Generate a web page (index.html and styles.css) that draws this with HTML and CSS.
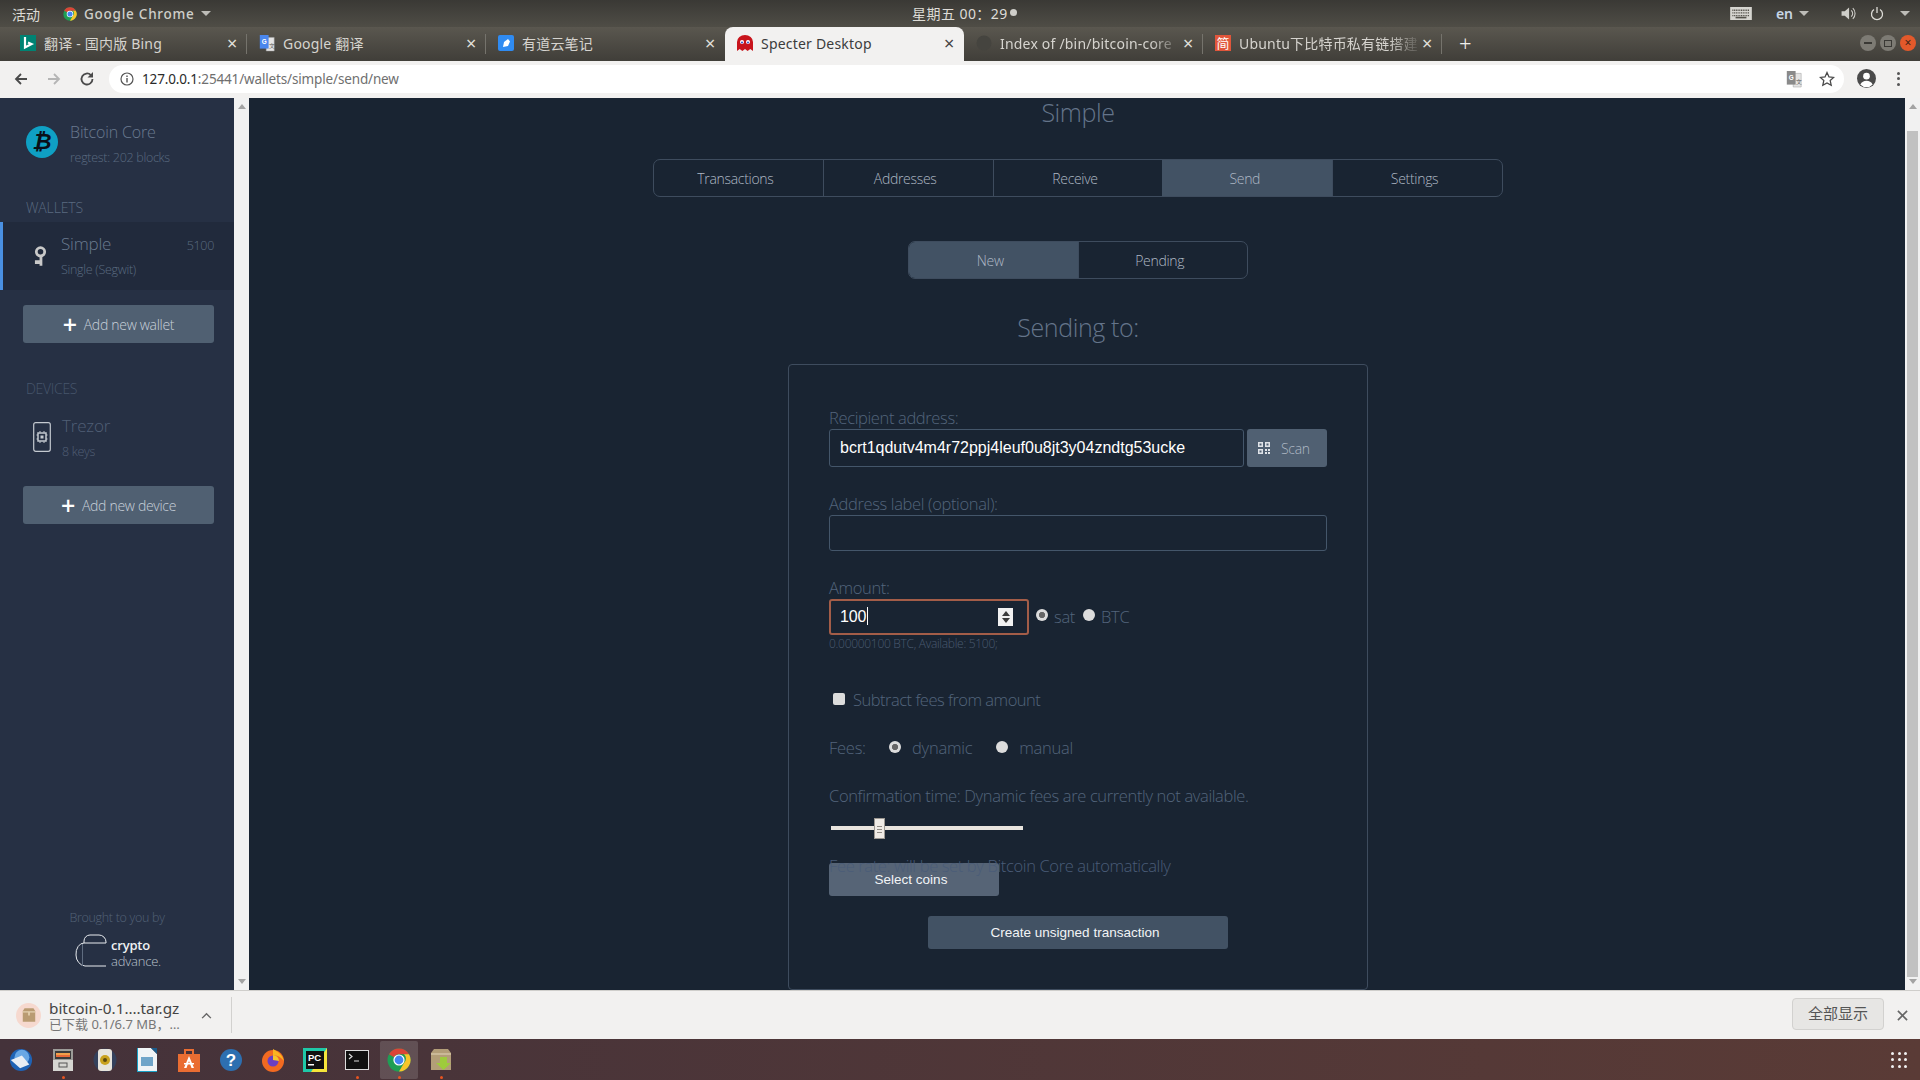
FILE: index.html
```html
<!DOCTYPE html>
<html lang="zh">
<head>
<meta charset="utf-8">
<title>Specter Desktop</title>
<link rel="stylesheet" href="styles.css">
</head>
<body>
<svg class="sprite" width="0" height="0">
  <symbol id="chrome" viewBox="0 0 24 24">
    <circle cx="12" cy="12" r="11.5" fill="#1e9e55"/>
    <path d="M12 .5a11.5 11.5 0 0 1 10 5.75H12a5.75 5.75 0 0 0-5 2.9L2 6.25A11.5 11.5 0 0 1 12 .5z" fill="#db4437"/>
    <path d="M22 6.25A11.5 11.5 0 0 1 12 23.5l5-8.6a5.75 5.75 0 0 0 0-8.65z" fill="#f7c52b"/>
    <circle cx="12" cy="12" r="5.6" fill="#fff"/>
    <circle cx="12" cy="12" r="4.4" fill="#4285f4"/>
  </symbol>
  <symbol id="translate" viewBox="0 0 20 22">
    <path d="M9 4h10v17H9z" fill="#e4e4e4" stroke="#999" stroke-width=".6"/>
    <path d="M1 1h11v17H1z" fill="currentColor"/>
    <text x="3.4" y="12" font-size="8" font-weight="700" fill="#fff" font-family="Liberation Sans">G</text>
    <text x="12" y="17" font-size="7" fill="#555" font-family="Liberation Sans">文</text>
  </symbol>
</svg>

<header class="sysbar">
  <div class="sys-left">
    <span class="sys-activities">活动</span>
    <svg class="ic-chrome-small"><use href="#chrome"/></svg>
    <span class="sys-app">Google Chrome</span><i class="caret"></i>
  </div>
  <div class="sys-clock">星期五 00：29<i class="sys-dot"></i></div>
  <div class="sys-right">
    <svg class="ic-kbd" viewBox="0 0 20 12"><rect width="20" height="12" fill="#d6d5d0"/><path d="M2 3h16M2 5.5h16M2 8h16" stroke="#55534c" stroke-width="1.2" stroke-dasharray="1 .6"/><rect x="5" y="9" width="10" height="1.5" fill="#55534c"/></svg>
    <span class="sys-lang">en</span><i class="caret"></i>
    <svg class="ic-vol" viewBox="0 0 14 14"><path d="M1 5h3l4-3.5v11L4 9H1z" fill="#cfcec9"/><path d="M10 4a4 4 0 0 1 0 6M11.5 2a7 7 0 0 1 0 10" fill="none" stroke="#cfcec9" stroke-width="1"/></svg>
    <svg class="ic-power" viewBox="0 0 14 14"><path d="M4 3a5.5 5.5 0 1 0 6 0M7 .5v6" fill="none" stroke="#dcdbd6" stroke-width="1.3"/></svg>
    <i class="caret caret-power"></i>
  </div>
</header>

<nav class="tabstrip">
  <div class="tab">
    <svg class="fav" viewBox="0 0 16 16"><rect width="16" height="16" fill="#008373"/><path d="M5 2v10.5L11.5 9 8 7.5" fill="none" stroke="#fff" stroke-width="2.2"/></svg>
    <span class="tab-title">翻译 - 国内版 Bing</span><span class="tab-x">×</span>
  </div>
  <div class="tab">
    <svg class="fav fav-translate"><use href="#translate"/></svg>
    <span class="tab-title">Google 翻译</span><span class="tab-x">×</span>
  </div>
  <div class="tab tab-pre-active">
    <svg class="fav" viewBox="0 0 16 16"><rect width="16" height="16" rx="2" fill="#2f8bf2"/><path d="M5 12l1-5 4-3 2 2.500-2 4.500z" fill="#fff"/></svg>
    <span class="tab-title">有道云笔记</span><span class="tab-x">×</span>
  </div>
  <div class="tab tab-active">
    <svg class="fav" viewBox="0 0 16 16"><path d="M0 16V7a8 7 0 0 1 16 0v9l-2.700-2-2.700 2L8 14l-2.600 2-2.700-2z" fill="#c8141c"/><circle cx="5" cy="7" r="2" fill="#fff"/><circle cx="11" cy="7" r="2" fill="#fff"/><circle cx="5" cy="7.500" r="1" fill="#2a52c9"/><circle cx="11" cy="7.500" r="1" fill="#2a52c9"/></svg>
    <span class="tab-title">Specter Desktop</span><span class="tab-x">×</span>
  </div>
  <div class="tab">
    <svg class="fav" viewBox="0 0 16 16"><circle cx="8" cy="8" r="7.500" fill="#45443f"/></svg>
    <span class="tab-title tab-fade">Index of /bin/bitcoin-core</span><span class="tab-x">×</span>
  </div>
  <div class="tab">
    <span class="fav fav-jian">简</span>
    <span class="tab-title tab-fade">Ubuntu下比特币私有链搭建</span><span class="tab-x">×</span>
  </div>
  <span class="tab-new">+</span>
  <div class="winbtns">
    <span class="winbtn"><i class="w-min"></i></span>
    <span class="winbtn"><i class="w-max"></i></span>
    <span class="winbtn winbtn-close">×</span>
  </div>
</nav>

<div class="toolbar">
  <svg class="tb-ic" viewBox="0 0 16 16"><path d="M14 8H3M8 3L3 8l5 5" fill="none" stroke="#4a4a4a" stroke-width="1.800"/></svg>
  <svg class="tb-ic" viewBox="0 0 16 16"><path d="M2 8h11M8 3l5 5-5 5" fill="none" stroke="#b5b5b5" stroke-width="1.800"/></svg>
  <svg class="tb-ic" viewBox="0 0 16 16"><path d="M13.500 8a5.500 5.500 0 1 1-1.600-3.900" fill="none" stroke="#4a4a4a" stroke-width="1.800"/><path d="M14 1v5.500H8.500z" fill="#4a4a4a"/></svg>
  <div class="omnibox">
    <svg class="omni-info" viewBox="0 0 14 14"><circle cx="7" cy="7" r="6" fill="none" stroke="#555" stroke-width="1.200"/><path d="M7 6v4.500M7 3.500v1.500" stroke="#555" stroke-width="1.400"/></svg>
    <span class="omni-url"><b>127.0.0.1</b>:25441/wallets/simple/send/new</span>
    <svg class="omni-trans"><use href="#translate"/></svg>
    <svg class="omni-star" viewBox="0 0 16 16"><path d="M8 1.500l2 4.400 4.700.5-3.500 3.200 1 4.700L8 11.900l-4.200 2.400 1-4.700L1.300 6.400 6 5.900z" fill="none" stroke="#4a4a4a" stroke-width="1.300"/></svg>
  </div>
  <svg class="tb-avatar" viewBox="0 0 16 16"><circle cx="8" cy="8" r="8" fill="#4a4a4a"/><circle cx="8" cy="6" r="2.800" fill="#fff"/><path d="M2.800 13a6 6 0 0 1 10.400 0A7 7 0 0 1 2.800 13z" fill="#fff"/></svg>
  <span class="tb-menu"><i></i><i></i><i></i></span>
</div>

<div class="page">
  <aside class="sidebar">
    <div class="side-inner">
      <div class="node">
        <span class="btc-logo">₿</span>
        <div><div class="side-title">Bitcoin Core</div><div class="side-sub">regtest: 202 blocks</div></div>
      </div>
      <div class="side-section sec-wallets">WALLETS</div>
      <div class="side-item side-item-active">
        <svg class="ic-key" viewBox="0 0 14 22"><circle cx="7" cy="6" r="4.500" fill="none" stroke="#c9c9c9" stroke-width="3"/><path d="M6 9v12h3V9zM1 15h5v4H1z" fill="#c9c9c9"/></svg>
        <div class="side-item-body">
          <div class="side-item-head"><span class="side-title side-name">Simple</span><span class="side-num">5100</span></div>
          <div class="side-sub">Single (Segwit)</div>
        </div>
      </div>
      <button class="side-btn"><span class="plus">+</span>Add new wallet</button>
      <div class="side-section sec-devices">DEVICES</div>
      <div class="side-item side-item-device">
        <svg class="ic-dev" viewBox="0 0 18 30"><rect x=".7" y=".7" width="16.600" height="28.600" rx="2" fill="none" stroke="#c4c9d0" stroke-width="1.200"/><rect x="5" y="11" width="8" height="8" fill="none" stroke="#c4c9d0" stroke-width="1.500"/><rect x="7.500" y="13.500" width="3" height="3" fill="#c4c9d0"/><path d="M3.500 13h1.500M3.500 17h1.500M13 13h1.500M13 17h1.500M7 9v1.500M11 9v1.500M7 19.500V21M11 19.500V21" stroke="#c4c9d0"/></svg>
        <div class="side-item-body">
          <div class="side-title side-name dim">Trezor</div>
          <div class="side-sub dim">8 keys</div>
        </div>
      </div>
      <button class="side-btn btn-device"><span class="plus">+</span>Add new device</button>
      <div class="brought">
        <div class="brought-text">Brought to you by</div>
        <div class="ca-logo">
          <svg class="ca-mark" viewBox="0 0 34 34"><path d="M9 9V7a6 6 0 0 1 6-6h9a7 7 0 0 1 7 7v1M31 9H9a8 11 0 0 0-8 12 10 11 0 0 0 9 11h21" fill="none" stroke="#e8ebef" stroke-width="1"/><path d="M7.500 10v22" stroke="#5f6c80" stroke-width="1"/></svg>
          <div class="ca-words"><div class="ca-crypto">crypto</div><div class="ca-adv">advance.</div></div>
        </div>
      </div>
    </div>
    <div class="scroll scroll-side"><i class="arr-up"></i><i class="arr-down"></i></div>
  </aside>

  <main class="main">
    <h1 class="title">Simple</h1>
    <div class="seg seg-main">
      <a class="seg-i">Transactions</a><a class="seg-i">Addresses</a><a class="seg-i">Receive</a><a class="seg-i seg-on">Send</a><a class="seg-i">Settings</a>
    </div>
    <div class="seg seg-sub">
      <a class="seg-i seg-on">New</a><a class="seg-i">Pending</a>
    </div>
    <h2 class="sending">Sending to:</h2>
    <form class="card">
      <label class="lbl">Recipient address:</label>
      <div class="addr-row">
        <div class="field field-addr">bcrt1qdutv4m4r72ppj4leuf0u8jt3y04zndtg53ucke</div>
        <button type="button" class="scan">
          <svg class="ic-qr" viewBox="0 0 12 12"><path d="M0 0h5v5H0zM7 0h5v5H7zM0 7h5v5H0z" fill="#dfe3e8"/><path d="M1.500 1.500h2v2h-2zM8.500 1.500h2v2h-2zM1.500 8.500h2v2h-2z" fill="#506072"/><path d="M7 7h2v2H7zM10 7h2v2h-2zM7 10h2v2H7zM10 10h2v2h-2z" fill="#dfe3e8"/></svg>
          Scan
        </button>
      </div>
      <label class="lbl gap26">Address label (optional):</label>
      <div class="field field-label"></div>
      <label class="lbl gap26">Amount:</label>
      <div class="amount-row">
        <div class="field field-amount">100<i class="cursor"></i><span class="spin"><i class="spin-up"></i><i class="spin-down"></i></span></div>
        <span class="radio radio-on"></span><span class="opt opt-sat">sat</span>
        <span class="radio radio-btc"></span><span class="opt">BTC</span>
      </div>
      <div class="hint">0.00000100 BTC, Available: 5100;</div>
      <div class="lbl check-row"><span class="checkbox"></span>Subtract fees from amount</div>
      <div class="lbl gap26 fee-row">
        <span class="fee-name">Fees:</span>
        <span class="radio radio-on"></span><span class="fee-opt">dynamic</span>
        <span class="radio"></span><span class="fee-opt">manual</span>
      </div>
      <div class="lbl gap26">Confirmation time: Dynamic fees are currently not available.</div>
      <div class="slider"><i class="thumb"></i></div>
      <div class="lbl fee-rate">Fee rate: will be set by Bitcoin Core automatically</div>
      <button type="button" class="btn-coins">Select coins</button>
      <button type="button" class="btn-create">Create unsigned transaction</button>
    </form>
  </main>
  <div class="scroll scroll-main"><i class="arr-up"></i><b class="thumb-v"></b><i class="arr-down"></i></div>
</div>

<footer class="downloads">
  <span class="dl-icon">
    <svg viewBox="0 0 18 15"><path d="M2 3l2-3h10l2 3v12H2z" fill="#b99b72"/><path d="M2 4h14" stroke="#e2cfae" stroke-width="1.500"/><path d="M8 4h2v4H8z" fill="#e2cfae"/></svg>
  </span>
  <div class="dl-text">
    <div class="dl-name">bitcoin-0.1….tar.gz</div>
    <div class="dl-sub">已下载 0.1/6.7 MB，…</div>
  </div>
  <svg class="dl-chev" viewBox="0 0 12 8"><path d="M1 7l5-5 5 5" fill="none" stroke="#666" stroke-width="1.600"/></svg>
  <i class="dl-sep"></i>
  <button class="dl-all">全部显示</button>
  <svg class="dl-close" viewBox="0 0 12 12"><path d="M1 1l10 10M11 1L1 11" stroke="#666" stroke-width="1.800"/></svg>
</footer>

<div class="dock">
  <span class="dk"><svg viewBox="0 0 26 26"><circle cx="13" cy="13" r="12" fill="#1f63b5"/><circle cx="14" cy="10" r="8" fill="#69a7e4"/><path d="M2 13l12-5 8 10-10 4z" fill="#e9eef4"/></svg></span>
  <span class="dk dk-run"><svg viewBox="0 0 22 24"><rect x="1" y="1" width="20" height="22" fill="#9c9c98"/><rect x="3" y="3" width="16" height="8" fill="#3b3b3b"/><path d="M4 5h14v2H4z" fill="#f0a04b"/><path d="M4 7h14v2H4z" fill="#e86a38"/><rect x="1" y="12" width="20" height="11" fill="#d6d6d2"/><rect x="7" y="15" width="8" height="4" fill="none" stroke="#555"/></svg></span>
  <span class="dk"><svg viewBox="0 0 24 24"><circle cx="12" cy="12" r="11.500" fill="#34415c"/><rect x="5" y="1" width="14" height="22" rx="3" fill="#e6e4dc"/><circle cx="12" cy="12" r="5" fill="#c9a21e"/><circle cx="12" cy="12" r="2" fill="#5b4a10"/></svg></span>
  <span class="dk"><svg viewBox="0 0 20 24"><path d="M0 0h14l6 6v18H0z" fill="#f0f4f6"/><path d="M14 0l6 6V0z" fill="#1a5c8c"/><rect x="4" y="9" width="12" height="9" fill="#6fa5c9"/><path d="M0 0h1v24H0zM0 23h20v1H0z" fill="#18a0c6"/></svg></span>
  <span class="dk"><svg viewBox="0 0 22 24"><path d="M0 6h22v18H0z" fill="#ea6d32"/><path d="M7 6V2h8v4" fill="none" stroke="#ea6d32" stroke-width="2"/><path d="M11 8l5 12h-2.500l-2.500-7-2.500 7H6z" fill="#fff"/><path d="M6 15h10v1.500H6z" fill="#fff"/></svg></span>
  <span class="dk"><svg viewBox="0 0 24 24"><circle cx="12" cy="12" r="11" fill="#2d6fb0"/><text x="12" y="18" text-anchor="middle" font-size="17" font-weight="700" fill="#fff" font-family="Liberation Sans">?</text></svg></span>
  <span class="dk"><svg viewBox="0 0 24 24"><circle cx="12" cy="13" r="11" fill="#f26a21"/><path d="M12 1c6 3 10 7 11 12-3-4-7-6-11-6z" fill="#fbb320"/><circle cx="12" cy="13" r="5.500" fill="#6b3fc4"/><path d="M12 7a6 6 0 0 1 6 6l-6-1z" fill="#f7c52b"/></svg></span>
  <span class="dk"><svg viewBox="0 0 24 24"><rect width="24" height="24" fill="#1fc8a8"/><path d="M24 0v24H8z" fill="#f6e63a"/><rect x="3" y="3" width="18" height="18" fill="#111"/><text x="5" y="13" font-size="9.500" font-weight="700" fill="#fff" font-family="Liberation Sans">PC</text><rect x="5" y="16" width="6" height="1.500" fill="#fff"/></svg></span>
  <span class="dk dk-run"><svg viewBox="0 0 24 20"><rect x=".5" y=".5" width="23" height="19" fill="#111" stroke="#ddd"/><path d="M4 4l3 2.500L4 9M9 11h5" fill="none" stroke="#ddd" stroke-width="1.200"/></svg></span>
  <span class="dk dk-run dk-active"><svg><use href="#chrome"/></svg></span>
  <span class="dk dk-run"><svg viewBox="0 0 24 24"><path d="M2 5l3-4h14l3 4v17H2z" fill="#b39e78"/><path d="M2 6h20" stroke="#e2d4b8"/><path d="M10 10h7v6h4l-7.500 7L6 16h4z" transform="translate(1 -1)" fill="#9ecb3c"/></svg></span>
  <span class="apps-grid"><i></i><i></i><i></i><i></i><i></i><i></i><i></i><i></i><i></i></span>
</div>
</body>
</html>
```

FILE: styles.css
```css
* { box-sizing: border-box; }
html, body { margin: 0; height: 1080px; overflow: hidden; }
body {
  display: flex;
  flex-direction: column;
  width: 1920px;
  font-family: "Noto Sans", "Noto Sans CJK SC", sans-serif;
}
i { display: block; }
button { font: inherit; border: 0; }
.sprite { position: absolute; }

/* system bar */
.sysbar {
  flex: 0 0 27px;
  display: flex;
  align-items: center;
  position: relative;
  background: linear-gradient(#3a3935, #4f4d46);
  color: #dcdbd6;
  font-size: 14px;
}
.sys-left { display: flex; align-items: center; padding-left: 12px; }
.sys-activities { width: 51px; }
.ic-chrome-small { width: 14px; height: 14px; }
.sys-app { margin-left: 7px; font-weight: 500; font-size: 13.500px; color: #cfcfca; letter-spacing: .75px; }
.caret { width: 0; height: 0; border: 5px solid transparent; border-top: 5.500px solid #bdbcb7; border-bottom: 0; margin-left: 6px; }
.sys-clock {
  position: absolute; left: 912px; top: 4px;
  display: flex; align-items: center;
  font-size: 14px; line-height: 20px; color: #dedcd7; letter-spacing: .45px;
}
.sys-dot { width: 7px; height: 7px; border-radius: 50%; background: #cfcec9; margin-left: 2px; margin-top: -3px; }
.sys-right { margin-left: auto; display: flex; align-items: center; padding-right: 10px; }
.ic-kbd { width: 22px; height: 13px; }
.sys-lang { margin-left: 24px; font-weight: 600; font-size: 14px; color: #c8d6e5; }
.ic-vol { width: 16px; height: 15px; margin-left: 31px; }
.ic-power { width: 14px; height: 15px; margin-left: 14px; }
.caret-power { margin-left: 16px; }

/* tabs */
.tabstrip {
  flex: 0 0 34px;
  display: flex;
  padding-left: 8px;
  background: linear-gradient(#5a574f, #403e39);
  color: #d6d4cf;
  font-size: 14px;
  position: relative;
}
.tab {
  width: 239px;
  display: flex;
  align-items: center;
  padding: 0 0 2px 12px;
  position: relative;
}
.tab::after {
  content: ""; position: absolute; right: 0; top: 7px; height: 20px; width: 1px; background: #75736c;
}
.tab-pre-active::after, .tab-active::after { background: transparent; }
.fav { width: 16px; height: 16px; flex: none; }
.fav-translate { width: 16px; height: 18px; color: #4a87ee; }
.fav-jian { background: #e0563b; color: #fff; font-size: 13px; line-height: 16px; text-align: center; }
.tab-title { margin-left: 8px; flex: 1; white-space: nowrap; overflow: hidden; font-size: 14px; letter-spacing: .2px; }
.tab-fade { -webkit-mask-image: linear-gradient(90deg, #000 82%, transparent 100%); mask-image: linear-gradient(90deg, #000 82%, transparent 100%); }
.tab-x { width: 20px; text-align: left; font-size: 18px; color: #e2e0db; line-height: 20px; }
.tab-active {
  background: #f2f1f0; color: #3c3c3c; border-radius: 8px 8px 0 0; height: 34px;
}
.tab-active .tab-x { color: #444; }
.tab-new { font-size: 22px; font-weight: 300; margin-left: 17px; color: #f0efeb; line-height: 32px; }
.winbtns { margin-left: auto; display: flex; gap: 4px; align-items: center; padding: 0 4px 2px 0; }
.winbtn {
  width: 16px; height: 16px; border-radius: 50%; background: #7d7b74;
  display: flex; align-items: center; justify-content: center;
  color: #3a3935; font-size: 12px; line-height: 16px;
}
.winbtn-close { background: #e2592b; color: #402418; }
.w-min { width: 8px; height: 1.500px; background: #3a3935; }
.w-max { width: 8px; height: 7px; border: 1px solid #3a3935; }

/* toolbar */
.toolbar {
  flex: 0 0 37px;
  display: flex;
  align-items: center;
  background: #f2f1f0;
  padding: 0 0 2px 13px;
}
.tb-ic { width: 16px; height: 16px; margin-right: 17px; flex: none; }
.omnibox {
  width: 1735px; height: 28px; margin-left: -3px;
  background: #fff; border-radius: 14px;
  display: flex; align-items: center; padding-left: 11px;
  font-size: 13.500px; color: #6f6f6f;
}
.omni-info { width: 14px; height: 14px; flex: none; }
.omni-url { margin-left: 8px; letter-spacing: -.15px; }
.omni-url b { font-weight: 400; color: #2a2a2a; }
.omni-trans { width: 16px; height: 18px; margin-left: auto; color: #8a8a8a; }
.omni-star { width: 16px; height: 16px; margin-left: 17px; margin-right: 9px; }
.tb-avatar { width: 19px; height: 19px; margin-left: 13px; flex: none; }
.tb-menu { margin-left: 21px; display: flex; flex-direction: column; gap: 2.500px; }
.tb-menu i { width: 3px; height: 3px; border-radius: 50%; background: #555; }

/* page */
.page { flex: 0 0 892px; display: flex; overflow: hidden; font-family: "Open Sans", sans-serif; font-weight: 300; }
.sidebar { width: 249px; display: flex; flex: none; background: #263044; }
.side-inner { width: 234px; padding-top: 28px; }
.scroll { width: 15px; flex: none; background: #f1f1f1; display: flex; flex-direction: column; align-items: center; justify-content: space-between; padding: 6px 0; }
.arr-up { width: 0; height: 0; border: 4px solid transparent; border-bottom: 5px solid #a3a3a3; border-top: 0; }
.arr-down { width: 0; height: 0; border: 4px solid transparent; border-top: 5px solid #a3a3a3; border-bottom: 0; }
.thumb-v { width: 11px; flex: 1; background: #c1c1c1; margin: 22px 0 2px; }
.node { display: flex; padding-left: 26px; height: 44px; }
.btc-logo {
  width: 32px; height: 32px; border-radius: 50%; background: #0fa0c4; color: #0a0f18; flex: none;
  font-family: "DejaVu Sans", sans-serif; font-weight: 700; font-style: italic; font-size: 22px; line-height: 32px; text-align: center;
  margin-right: 12px;
}
.side-title { font-size: 16px; line-height: 22px; color: #6a7a90; letter-spacing: -.15px; margin-top: -5px; }
.side-name { font-size: 17px; letter-spacing: -.2px; }
.side-sub { font-size: 12.500px; line-height: 18px; color: #5a6a80; letter-spacing: -.3px; margin-top: 6px; }
.side-section { font-size: 14px; line-height: 20px; padding-left: 26px; color: #5a6a80; letter-spacing: -.15px; }
.sec-wallets { margin-top: 28px; }
.sec-devices { margin-top: 36px; color: #47566c; letter-spacing: -.3px; }
.side-item { display: flex; height: 68px; align-items: center; padding-left: 33px; border-left: 3px solid transparent; margin-top: 4px; }
.side-item-active { background: #212a3c; border-left-color: #4a90e2; padding-left: 31px; }
.side-item-device { margin-top: 4px; }
.side-item-body { flex: 1; padding-left: 14px; padding-right: 20px; padding-top: 4px; }
.side-item-device .side-item-body { padding-top: 6px; }
.side-item-head { display: flex; justify-content: space-between; align-items: baseline; }
.side-num { font-size: 12.500px; color: #5a6a80; letter-spacing: -.3px; }
.ic-key { width: 13px; height: 21px; flex: none; }
.ic-dev { width: 18px; height: 30px; flex: none; margin: 0 -3px 0 -3px; }
.dim { color: #515f76; }
.side-btn {
  display: flex; align-items: center; justify-content: center;
  width: 191px; height: 38px; margin: 15px 0 0 23px;
  background: #506072; border-radius: 3px; color: #c8d0da;
  font-family: "Open Sans", sans-serif; font-weight: 300; font-size: 14px; letter-spacing: -.3px;
}
.btn-device { margin-top: 15px; }
.plus { font-size: 25px; font-weight: 600; color: #fff; line-height: 20px; margin-right: 7px; }
.brought { margin-top: 385px; text-align: center; }
.brought-text { font-size: 12.500px; line-height: 18px; color: #536277; letter-spacing: -.3px; }
.ca-logo { display: flex; padding-left: 75px; margin-top: 7px; text-align: left; }
.ca-mark { width: 34px; height: 34px; flex: none; }
.ca-words { margin-left: 2px; padding-top: 1px; }
.ca-crypto { font-size: 13px; line-height: 15px; font-weight: 600; color: #eef0f3; letter-spacing: -.2px; margin-top: 3px; }
.ca-adv { font-size: 13px; line-height: 16px; color: #b9c1cc; letter-spacing: -.2px; }

.main { flex: 1; background: #192432; display: flex; flex-direction: column; align-items: center; padding-left: 2px; }
.title { margin: 0; font-size: 25px; line-height: 28px; font-weight: 300; color: #64748a; letter-spacing: -.4px; }
.seg {
  display: flex; height: 38px; border: 1px solid #3e4c5e; border-radius: 7px; overflow: hidden;
  font-size: 14px; color: #aeb8c4; letter-spacing: -.3px;
}
.seg-main { margin-top: 33px; width: 850px; }
.seg-sub { margin-top: 44px; width: 340px; }
.seg-i { flex: 1; display: flex; align-items: center; justify-content: center; border-left: 1px solid #3e4c5e; padding-right: 6px; }
.seg-i:first-child { border-left: 0; }
.seg-on { background: #425264; border-left-color: #425264; }
.sending { margin: 33px 0 0; font-size: 25px; line-height: 30px; font-weight: 300; color: #64748a; letter-spacing: -.4px; }
.card {
  margin-top: 22px; width: 580px; height: 626px; flex: none;
  border: 1px solid #3e4c5e; border-radius: 4px; padding: 42px 0 0 40px;
}
.lbl { display: block; font-size: 16.500px; line-height: 22px; color: #53647c; letter-spacing: -.36px; }
.gap26 { margin-top: 26px; }
.addr-row { display: flex; gap: 3px; }
.field { border: 1px solid #44566a; border-radius: 3px; background: #192432; color: #fff; font: 400 16px/36px "Liberation Sans", sans-serif; padding-left: 10px; }
.field-addr { width: 415px; height: 38px; }
.field-label { width: 498px; height: 36px; }
.scan {
  width: 80px; height: 38px; background: #506072; border-radius: 3px;
  display: flex; align-items: center; gap: 11px; padding: 0 0 0 11px;
  font-family: "Open Sans", sans-serif; font-weight: 300; font-size: 14px; letter-spacing: -.3px; color: #aeb8c4;
}
.ic-qr { width: 12px; height: 12px; }
.amount-row { display: flex; align-items: center; }
.field-amount {
  width: 200px; height: 36px; border: 2px solid #a35d48; line-height: 31px; padding: 0 0 2px 9px;
  display: flex; align-items: center; position: relative; letter-spacing: -.2px;
}
.cursor { width: 1px; height: 18px; background: #fff; margin-left: 1px; }
.spin {
  position: absolute; left: 167px; top: 7px; width: 15px; height: 18px; background: #f1f1f1;
  display: flex; flex-direction: column; align-items: center; justify-content: center; gap: 2px;
}
.spin-up { width: 0; height: 0; border: 4px solid transparent; border-bottom: 5px solid #3a3a3a; border-top: 0; }
.spin-down { width: 0; height: 0; border: 4px solid transparent; border-top: 5px solid #3a3a3a; border-bottom: 0; }
.radio { width: 12px; height: 12px; border-radius: 50%; background: #dcdcdc; flex: none; }
.radio-on { background: radial-gradient(circle, #666 0 2.800px, #dcdcdc 3.500px); }
.amount-row .radio { margin-top: -4px; }
.amount-row .radio-on { margin-left: 7px; }
.opt { font-size: 16.500px; color: #53647c; letter-spacing: -.3px; margin: -2px 0 0 6px; }
.opt-sat { margin-right: 8px; }
.hint { font-size: 12px; line-height: 18px; color: #4a5a70; letter-spacing: -.3px; }
.check-row { margin-top: 36px; display: flex; align-items: center; padding-left: 4px; letter-spacing: -.5px; }
.checkbox { width: 12px; height: 12px; background: #dcdcdc; border-radius: 2px; margin-right: 8px; margin-top: -2px; }
.fee-row { display: flex; align-items: center; letter-spacing: -.25px; }
.fee-row .radio { margin-top: -2px; }
.fee-name { width: 60px; }
.fee-opt { margin-left: 11px; margin-right: 24px; }
.slider { margin: 19px 0 25px 2px; width: 192px; height: 4px; background: #e8e4de; position: relative; }
.thumb {
  position: absolute; left: 43px; top: -8px; width: 11px; height: 21px;
  background: repeating-linear-gradient(#efebe6 0 1px, #8f8b85 1px 2px, #efebe6 2px 3px) center / 5px 8px no-repeat, #efebe6;
  border: 1px solid #9c9892;
}
.fee-rate { position: relative; z-index: 1; color: #4a5c78; }
.btn-coins, .btn-create { display: block; color: #f2f4f6; font: 400 13.500px/33px "Liberation Sans", sans-serif; border-radius: 3px; height: 33px; padding: 0; }
.btn-coins { width: 170px; margin-top: -14px; background: #566476; padding-right: 6px; }
.btn-create { width: 300px; margin: 20px 0 0 99px; background: #425264; padding-right: 6px; }

/* downloads */
.downloads {
  flex: 0 0 49px; display: flex; align-items: center; position: relative;
  background: #f2f1f0; border-top: 1px solid #cfcecb; padding-left: 16px;
}
.dl-icon { width: 25px; height: 25px; border-radius: 50%; background: #f6d9cf; display: flex; align-items: center; justify-content: center; }
.dl-icon svg { width: 16px; height: 14px; }
.dl-text { margin-left: 8px; width: 150px; }
.dl-name { font-size: 15.300px; line-height: 17px; color: #444; }
.dl-sub { font-size: 13px; line-height: 14px; color: #777; white-space: nowrap; }
.dl-chev { width: 11px; height: 7px; margin-left: 2px; }
.dl-sep { width: 1px; height: 36px; background: #d2d1cf; margin-left: 19px; }
.dl-all { margin: 0 0 2px auto; width: 92px; height: 32px; background: #e7e6e4; border: 1px solid #d2d1cf; border-radius: 4px; font-size: 15px; line-height: 26px; padding: 0 0 2px; color: #555; font-family: "Noto Sans CJK SC", sans-serif; }
.dl-close { width: 11px; height: 11px; margin: 0 12px 0 13px; }

/* dock */
.dock { flex: 0 0 41px; display: flex; align-items: center; background: linear-gradient(90deg, #44323a, #5a3b36); position: relative; }
.dk { width: 42px; height: 41px; display: flex; align-items: center; justify-content: center; position: relative; flex: none; }
.dk svg { width: 24px; height: 24px; }
.dk-run::after { content: ""; position: absolute; bottom: 1px; left: 20px; width: 3px; height: 3px; border-radius: 50%; background: #e95420; }
.dk-active::before { content: ""; position: absolute; left: 2px; top: 2px; width: 38px; height: 38px; border-radius: 2px; background: rgba(255, 255, 255, .14); }
.dk-active svg { position: relative; }
.apps-grid { margin-left: auto; margin-right: 13px; display: grid; grid-template-columns: repeat(3, 3px); gap: 3.500px; }
.apps-grid i { width: 3px; height: 3px; border-radius: 50%; background: #f2f2f2; }
```
